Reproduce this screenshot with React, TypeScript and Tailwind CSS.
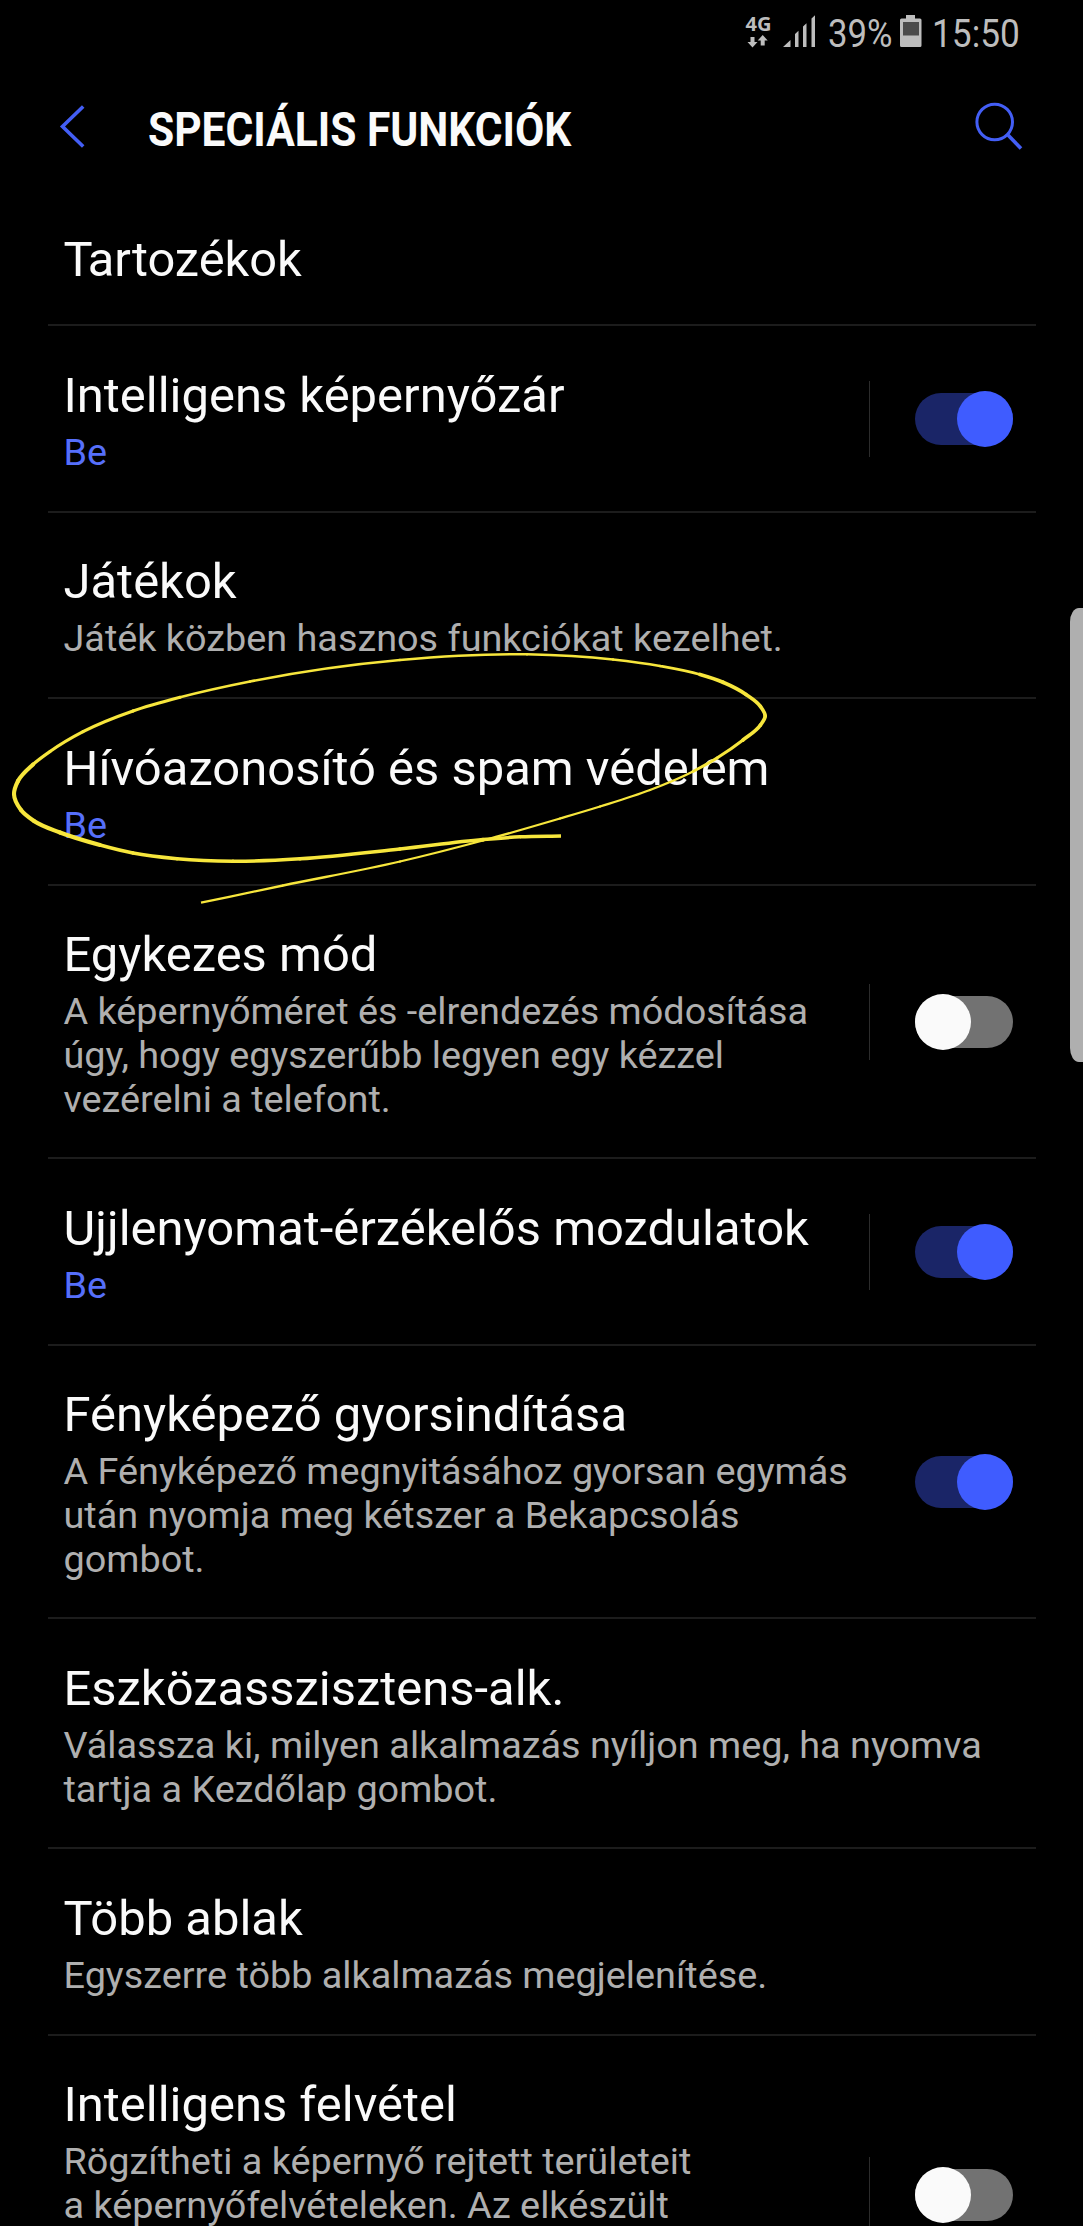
import React from "react";

type Item = {
  title: string;
  lines?: string[];
  accent?: boolean;
  toggle?: "on" | "off";
  split?: boolean;
  height: string;
};

const items: Item[] = [
  { title: "Intelligens képernyőzár", lines: ["Be"], accent: true, toggle: "on", split: true, height: "h-[186.5px]" },
  { title: "Játékok", lines: ["Játék közben hasznos funkciókat kezelhet."], height: "h-[186.5px]" },
  { title: "Hívóazonosító és spam védelem", lines: ["Be"], accent: true, height: "h-[186.5px]" },
  {
    title: "Egykezes mód",
    lines: ["A képernyőméret és -elrendezés módosítása", "úgy, hogy egyszerűbb legyen egy kézzel", "vezérelni a telefont."],
    toggle: "off",
    split: true,
    height: "h-[273.6px]",
  },
  { title: "Ujjlenyomat-érzékelős mozdulatok", lines: ["Be"], accent: true, toggle: "on", split: true, height: "h-[186.5px]" },
  {
    title: "Fényképező gyorsindítása",
    lines: ["A Fényképező megnyitásához gyorsan egymás", "után nyomja meg kétszer a Bekapcsolás", "gombot."],
    toggle: "on",
    height: "h-[273.6px]",
  },
  {
    title: "Eszközasszisztens-alk.",
    lines: ["Válassza ki, milyen alkalmazás nyíljon meg, ha nyomva", "tartja a Kezdőlap gombot."],
    height: "h-[230.1px]",
  },
  { title: "Több ablak", lines: ["Egyszerre több alkalmazás megjelenítése."], height: "h-[186.5px]" },
  {
    title: "Intelligens felvétel",
    lines: ["Rögzítheti a képernyő rejtett területeit", "a képernyőfelvételeken. Az elkészült"],
    toggle: "off",
    split: true,
    height: "h-[319px]",
  },
];

function Toggle({ on }: { on: boolean }) {
  return (
    <div
      className={
        on
          ? "flex h-[52px] w-[98px] items-center justify-end rounded-full bg-[#1a2567]"
          : "flex h-[52px] w-[98px] items-center justify-start rounded-full bg-[#727272]"
      }
    >
      <div className={on ? "size-14 shrink-0 rounded-full bg-[#3f5cff]" : "size-14 shrink-0 rounded-full bg-[#fafafa]"} />
    </div>
  );
}

function Row({ item }: { item: Item }) {
  return (
    <li className={`flex shrink-0 items-center border-t-2 border-[#1c1c1c] pr-[22.5px] pl-4 ${item.height}`}>
      <div className="grow self-start whitespace-nowrap pt-[40.5px]">
        <div className="text-[48.95px] leading-[57.2px] text-[#fafafa]">{item.title}</div>
        <div className={item.accent ? "pt-[7px] text-[#566ffa]" : "pt-[7px] text-[#afafaf]"}>
          {item.lines?.map((l) => (
            <div key={l} className="text-[37.8px] leading-[43.7px]">{l}</div>
          ))}
        </div>
      </div>
      {item.toggle && (
        <div className="flex items-center pt-px">
          {item.split && <div className="mr-[45px] h-[76px] w-px bg-[#2c2c2c]" />}
          <Toggle on={item.toggle === "on"} />
        </div>
      )}
    </li>
  );
}

function StatusBar() {
  return (
    <div className="flex h-[66px] shrink-0 items-start text-[#bdbdbd]">
      <svg className="ml-[744px] h-[66px] w-[80px]" viewBox="744 0 80 66" fill="currentColor">
        <text x="745.5" y="31" fontFamily="'Open Sans'" fontWeight="700" fontSize="19.5" textLength="26" lengthAdjust="spacingAndGlyphs">4G</text>
        <path d="M750.5 37h4v5h3l-5 5.5-5-5.5h3zM760.700 45.500h4v-5h3l-5-5.500-5 5.500h3z" />
        <path d="M783 47l7.500-7v7zM795 47V34l3.500-3.200V47zM803 47V26.500l3.500-3.200V47zM811.500 47V18.500l3.500-3.200V47z" />
      </svg>
      <div className="h-[66px] w-[76px] pl-[3.5px]">
        <span className="inline-block origin-left scale-x-[.88] pt-[11px] text-[39.5px] leading-[46px] whitespace-nowrap">39%</span>
      </div>
      <svg className="h-[66px] w-[22px]" viewBox="900 0 22 66" fill="currentColor">
        <path d="M906 15h9v3.500h5q1.500 0 1.500 1.500v25.500q0 1.500-1.500 1.500h-18.500q-1.500 0-1.500-1.500V20q0-1.500 1.500-1.500H906z" />
        <path d="M903 22h16v13.500h-16z" fill="#4b4b4b" />
      </svg>
      <span className="ml-[9.5px] inline-block origin-left scale-x-[.893] pt-[11px] text-[39.5px] leading-[46px] whitespace-nowrap">15:50</span>
    </div>
  );
}

function Header() {
  return (
    <header className="flex h-[126px] shrink-0 items-start">
      <svg className="ml-[56px] h-[126px] w-[32px] shrink-0" viewBox="56 66 32 126" fill="none" stroke="#435ef5" strokeWidth="3.600">
        <path d="M83.200 106.500L62.500 126.500L83.200 146.500" />
      </svg>
      <h1 className="ml-[60px] w-[824px] pt-[35px] whitespace-nowrap">
        <span className="inline-block origin-left scale-x-[.868] text-[49px] leading-[57px] font-bold text-[#fafafa]">SPECIÁLIS FUNKCIÓK</span>
      </h1>
      <svg className="h-[126px] w-[55px] shrink-0" viewBox="972 66 55 126" fill="none" stroke="#435ef5" strokeWidth="3">
        <circle cx="994.700" cy="122" r="17.800" />
        <path d="M1007.500 134.500L1021 148.500" strokeWidth="3.600" />
      </svg>
    </header>
  );
}

type Point = [number, number];

const strokePoints: Point[] = [
  [201, 902.7], [283, 885.5], [400, 861.5], [483, 840.5], [560, 818.5], [600, 806.5], [650, 790], [693, 771.5], [717, 758],
  [743, 740], [760.5, 725], [765.2, 716], [760.5, 706.5], [746, 694.5], [723, 682.3], [700, 674.5], [660, 666], [613, 659.5],
  [527, 654.3], [400, 660], [250, 681.5], [180, 697.3], [133, 711], [83, 731.7], [50, 751.5], [33, 764.5], [18, 781],
  [14, 794], [21, 810], [34, 821], [60, 832.5], [100, 845], [133, 853], [177, 858.7], [233, 861.3], [300, 858.8],
  [400, 849], [483, 839.5], [520, 836.8], [561, 836],
];

/** Splits a smooth curve through the points into one segment per pair, so the pen width can vary. */
function penSegments(p: Point[]) {
  const chords = p.slice(0, -1).map((a, i) => Math.hypot(p[i + 1][0] - a[0], p[i + 1][1] - a[1]));
  const dirs = p.slice(0, -1).map((a, i): Point => [(p[i + 1][0] - a[0]) / chords[i], (p[i + 1][1] - a[1]) / chords[i]]);
  const tangents = p.map((_, i): Point => {
    if (i === 0) return dirs[0];
    if (i === p.length - 1) return dirs[i - 1];
    const total = chords[i - 1] + chords[i];
    return [
      (dirs[i - 1][0] * chords[i] + dirs[i][0] * chords[i - 1]) / total,
      (dirs[i - 1][1] * chords[i] + dirs[i][1] * chords[i - 1]) / total,
    ];
  });
  return chords.map((chord, i) => {
    const a = p[i];
    const b = p[i + 1];
    const k = chord / 3;
    const width = i < 7 ? 2.3 : i < 9 ? 3 : i < 15 ? 3.7 : i < 21 ? 2.6 : i < 25 ? 3.2 : i < 31 ? 4.1 : 3.5;
    return {
      d: `M${a[0]} ${a[1]}C${a[0] + tangents[i][0] * k} ${a[1] + tangents[i][1] * k} ${b[0] - tangents[i + 1][0] * k} ${b[1] - tangents[i + 1][1] * k} ${b[0]} ${b[1]}`,
      width,
    };
  });
}

function PenMark() {
  return (
    <svg className="pointer-events-none absolute top-[640px] left-0 h-[280px] w-[800px]" viewBox="0 640 800 280" fill="none" stroke="#f7e63c">
      {penSegments(strokePoints).map((s, i) => (
        <path key={i} d={s.d} strokeWidth={s.width} strokeLinecap={i === 0 || i === strokePoints.length - 2 ? "butt" : "round"} />
      ))}
    </svg>
  );
}

export default function App() {
  return (
    <div className="relative flex h-[2226px] w-[1083px] flex-col overflow-hidden bg-black font-['Roboto',sans-serif]">
      <StatusBar />
      <Header />
      <div className="flex h-[132px] shrink-0 items-start pt-[38.5px] pl-[63.5px] text-[48.8px] leading-[57.2px] text-[#fafafa]">
        <div><span className="tracking-[-5px]">T</span>artozékok</div>
      </div>
      <ul className="ml-[47.5px] flex w-[988px] shrink-0 flex-col self-start">
        {items.map((item) => (
          <Row key={item.title} item={item} />
        ))}
      </ul>
      <div className="absolute top-[608px] right-0 h-[454px] w-[13px] rounded-l-[9px_14px] bg-[#afafaf]" />
      <PenMark />
    </div>
  );
}
